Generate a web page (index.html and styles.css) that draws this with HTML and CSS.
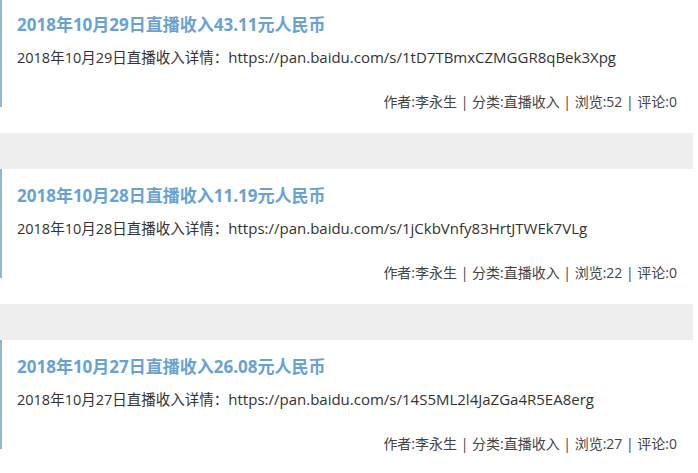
FILE: index.html
```html
<!DOCTYPE html>
<html lang="zh-CN">
<head>
  <meta charset="UTF-8" />
  <title>直播收入</title>
  <link rel="stylesheet" href="styles.css">
</head>
<body>
  <div class="list">
    <div class="post">
      <h2 class="post-title">2018年10月29日直播收入43.11元人民币</h2>
      <p class="post-desc">2018年10月29日直播收入详情：<span class="url">https://pan.baidu.com/s/1tD7TBmxCZMGGR8qBek3Xpg</span></p>
      <div class="post-meta">作者:李永生 | 分类:直播收入 | 浏览:52 | 评论:0</div>
    </div>

    <div class="post">
      <h2 class="post-title">2018年10月28日直播收入11.19元人民币</h2>
      <p class="post-desc">2018年10月28日直播收入详情：<span class="url">https://pan.baidu.com/s/1jCkbVnfy83HrtJTWEk7VLg</span></p>
      <div class="post-meta">作者:李永生 | 分类:直播收入 | 浏览:22 | 评论:0</div>
    </div>

    <div class="post">
      <h2 class="post-title">2018年10月27日直播收入26.08元人民币</h2>
      <p class="post-desc">2018年10月27日直播收入详情：<span class="url">https://pan.baidu.com/s/14S5ML2l4JaZGa4R5EA8erg</span></p>
      <div class="post-meta">作者:李永生 | 分类:直播收入 | 浏览:27 | 评论:0</div>
    </div>
  </div>
</body>
</html>
```

FILE: styles.css
```css
* {
  box-sizing: border-box;
  margin: 0;
  padding: 0;
}

body {
  background: #fff;
  font-family: "Open Sans", "Noto Sans CJK SC", sans-serif;
  overflow: hidden;
}

.list {
  width: 693px;
  margin-top: -2px;
  background: #eeeeee;
  display: flex;
  flex-direction: column;
  gap: 36px;
}

.post {
  position: relative;
  height: 135px;
  background: #fff;
  padding: 15px 16px 0 17px;
}

.post::before {
  content: "";
  position: absolute;
  left: 0;
  top: 0;
  width: 2px;
  height: 109px;
  background: #93b6d1;
}

.post-title {
  font-size: 17px;
  font-weight: bold;
  color: #68a2d5;
  line-height: 24px;
}

.post-desc {
  margin-top: 10px;
  font-size: 14.5px;
  color: #333;
  line-height: 20px;
}

.post-desc .url {
  font-size: 15px;
}

.post-meta {
  margin-top: 24px;
  text-align: right;
  font-size: 14px;
  color: #444;
  line-height: 20px;
}
```
